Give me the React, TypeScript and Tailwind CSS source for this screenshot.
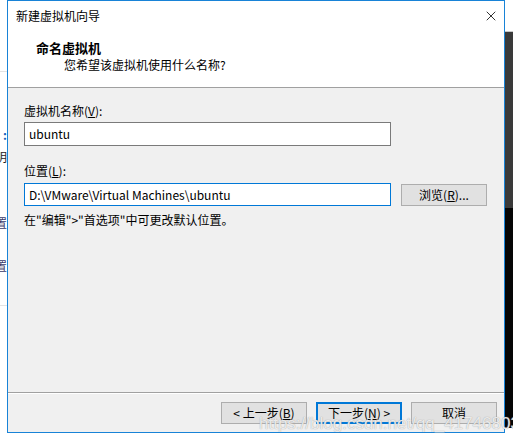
import { X } from 'lucide-react'

const font = "font-['Microsoft_YaHei_UI','Noto_Sans_CJK_SC',sans-serif]"

function Backdrop() {
  // sliver of the window behind the dialog, on the left edge
  return (
    <div className="w-[7px] h-full overflow-hidden flex flex-col bg-white text-[12px] leading-[16px]">
      <div className="h-[72px] border-b border-[#e3e3e3]" />
      <div className="h-[55px]" />
      <div className="flex justify-end text-[#1560b8] font-bold">:</div>
      <div className="h-[6px]" />
      <div className="flex justify-end whitespace-nowrap text-[#222]">说明</div>
      <div className="h-[50px]" />
      <div className="flex justify-end whitespace-nowrap text-[#3a3a6a]">设置</div>
      <div className="h-[27px]" />
      <div className="flex justify-end whitespace-nowrap text-[#3a3a6a]">设置</div>
      <div className="h-[32px] border-b border-[#e3e3e3]" />
    </div>
  )
}

function Shadow() {
  return (
    <div className="w-[8px] h-full flex flex-col">
      <div className="h-[32px] bg-white border-b border-[#c8c8c8]" />
      <div className="h-[176px] bg-[#3a3a3a]" />
      <div className="h-[220px] bg-[#050505]" />
      <div className="flex-1 bg-white" />
    </div>
  )
}

function WizardButton({ label, primary }: { label: React.ReactNode; primary?: boolean }) {
  return (
    <button
      type="button"
      className={
        'w-[86px] h-[22px] flex items-center justify-center bg-[#e1e1e1] text-[12px] text-black ' +
        (primary ? 'border-2 border-[#0078d7]' : 'border border-[#adadad]')
      }
    >
      {label}
    </button>
  )
}

export default function App() {
  return (
    <div className={`w-[513px] h-[440px] bg-white flex overflow-hidden relative ${font}`}>
      <Backdrop />

      <div className="w-[498px] h-[433px] border border-[#1883d7] flex flex-col">
        <div className="h-[87px] bg-white border-b border-[#a0a0a0] flex flex-col">
          <div className="h-[29px] flex items-center justify-between pl-[8px] pr-[5px]">
            <span className="text-[12px] leading-[16px] text-black">新建虚拟机向导</span>
            <X size={16} strokeWidth={1.2} className="text-black" />
          </div>
          <div className="pl-[28px] mt-[10px] text-[13px] leading-[16px] font-bold text-black">命名虚拟机</div>
          <div className="pl-[56px] mt-[1px] text-[12px] leading-[16px] text-black">您希望该虚拟机使用什么名称?</div>
        </div>

        <div className="flex-1 bg-[#f0f0f0] px-[16px] pt-[15px] text-[12px] leading-[16px] text-black">
          <div>
            虚拟机名称(<span className="underline">V</span>):
          </div>
          <div className="mt-[3px] w-[367px] h-[24px] bg-white border border-[#7a7a7a] flex items-center px-[4px]">
            ubuntu
          </div>
          <div className="mt-[17px]">
            位置(<span className="underline">L</span>):
          </div>
          <div className="mt-[4px] flex items-center gap-[10px]">
            <div className="w-[367px] h-[23px] bg-white border border-[#0078d7] flex items-center px-[4px]">
              D:\VMware\Virtual Machines\ubuntu
            </div>
            <button
              type="button"
              className="w-[86px] h-[22px] bg-[#e1e1e1] border border-[#adadad] flex items-center justify-center"
            >
              浏览(<span className="underline">R</span>)...
            </button>
          </div>
          <div className="mt-[6px]">在"编辑"&gt;"首选项"中可更改默认位置。</div>
        </div>

        <div className="h-[40px] bg-[#f0f0f0] border-t border-[#a0a0a0] shadow-[inset_0_1px_0_#ffffff] flex items-start justify-end gap-[9px] pt-[9px] pr-[7px]">
          <WizardButton label={<>&lt; 上一步(<span className="underline">B</span>)</>} />
          <WizardButton primary label={<>下一步(<span className="underline">N</span>) &gt;</>} />
          <WizardButton label="取消" />
        </div>
      </div>

      <Shadow />

      <div className="absolute left-[259px] top-[414px] font-['Liberation_Sans',sans-serif] text-[17px] leading-[20px] text-white/80 [text-shadow:0_0_1px_#8a8a8a] pointer-events-none whitespace-nowrap">
        https://blog.csdn.net/qq_41746803
      </div>
    </div>
  )
}
